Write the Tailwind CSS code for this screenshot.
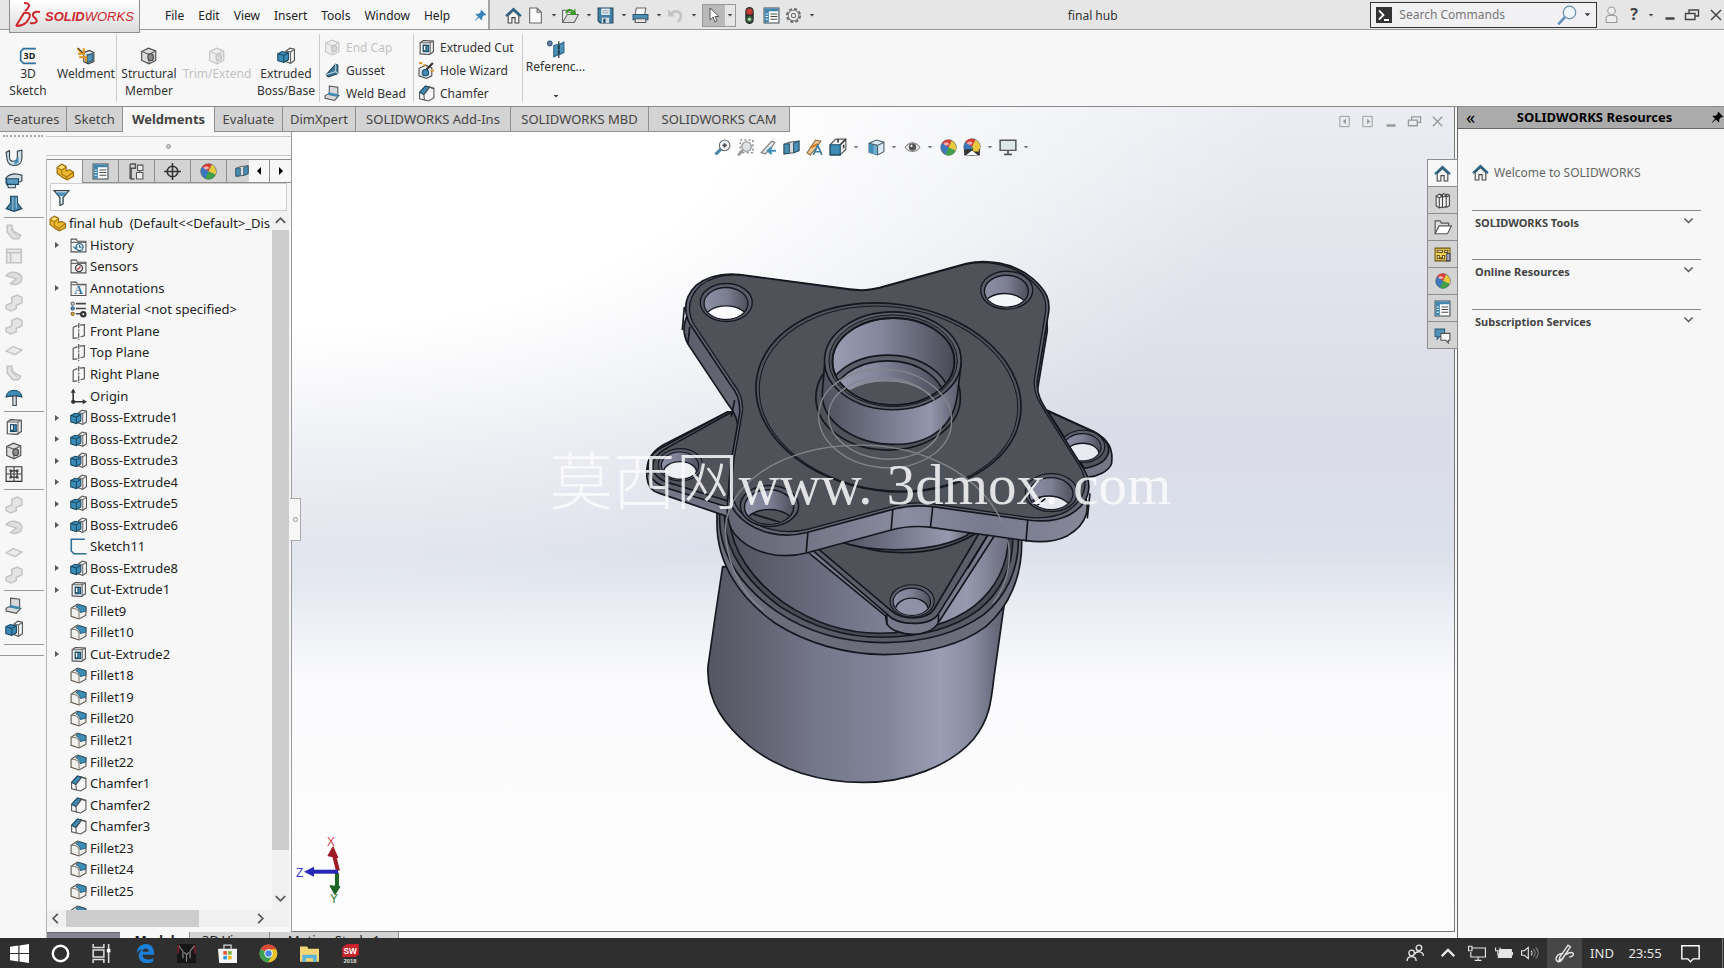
<!DOCTYPE html>
<html lang="en">
<head>
  <meta charset="UTF-8">
  <meta name="viewport" content="width=device-width, initial-scale=1.0">
  <title>final hub - SOLIDWORKS</title>
  <script src="https://cdn.jsdelivr.net/npm/@tailwindcss/browser@4"></script>
</head>
<body class="h-screen flex flex-col overflow-hidden bg-[#f7f7f7] font-['Noto_Sans','Open_Sans',sans-serif] text-[13px] leading-[17px] text-[#333]">

  <!-- Icon set -->
  <svg class="hidden">
    <symbol id="home" viewBox="0 0 16 16"><path d="M3 8v7h3.500v-5h3v5H13V8L8 3.500z" fill="#f4f4f4" stroke="#444"/><path d="M1 8.500 8 2l7 6.500" fill="none" stroke="#2c6486" stroke-width="2.200"/></symbol>
    <symbol id="doc" viewBox="0 0 16 16"><path d="M2.500 1h7l4 4v10h-11zM9.500 1v4h4" fill="#fbfbfb" stroke="#666"/></symbol>
    <symbol id="open" viewBox="0 0 16 16"><path d="M.5 14V3h5l1 2h6v2" fill="#eee" stroke="#666"/><path d="M.5 14.500 5 7h10.500l-4 7.500z" fill="#ddd" stroke="#666"/><path d="M4 6c1-4 4-4 6-2" fill="none" stroke="#3a9a22" stroke-width="2"/><path d="M12.500 1.500v6h-6z" fill="#3a9a22"/></symbol>
    <symbol id="save" viewBox="0 0 16 16"><path d="M1 1h14v14H3l-2-2z" fill="#3f7fa3" stroke="#25485e"/><path d="M4 1.500h8v6H4z" fill="#e9eef2"/><path d="M5 3.500h6M5 5.500h6" stroke="#9ab"/><path d="M4.500 10h7v5h-7z" fill="#cfd8de"/><path d="M6 11h2v4H6z" fill="#25485e"/></symbol>
    <symbol id="print" viewBox="0 0 16 16"><path d="M4 1h9l-1 6H3z" fill="#f5f5f5" stroke="#666"/><path d="M1 7h14v5H1z" fill="#4a8fb5" stroke="#2c5a74"/><path d="M3 11h10v3.500H3z" fill="#e5e5e5" stroke="#555"/></symbol>
    <symbol id="undo" viewBox="0 0 16 16"><path d="M3 7c4-5 11-3 10 3-.4 2-1.500 3-3 4" fill="none" stroke="#c4c4c4" stroke-width="2.500"/><path d="M1 2v7h7z" fill="#c4c4c4"/></symbol>
    <symbol id="cursor" viewBox="0 0 16 16"><path d="M4 1v12l3-3 2 5 2-1-2-4.500h4z" fill="#fff" stroke="#555"/></symbol>
    <symbol id="traffic" viewBox="0 0 16 16"><rect x="4" y="0" width="8" height="16" rx="4" fill="#2d2d2d"/><circle cx="8" cy="4.300" r="3" fill="#c33b35"/><circle cx="8" cy="11.500" r="3" fill="#35693a"/><circle cx="8" cy="11.500" r="1.500" fill="#b8dcb8"/></symbol>
    <symbol id="props" viewBox="0 0 16 16"><path d="M1 1h14v14H1z" fill="#fff" stroke="#3d4a52"/><path d="M1.500 1.500h13v2.500h-13zM1.500 4h4v10.500h-4z" fill="#3f86ae"/><path d="M2.500 6.500h2M2.500 9h2M2.500 11.500h2" stroke="#fff"/><path d="M7 6.500h6.500M7 9h6.500M7 11.500h6.500" stroke="#4a4a4a"/></symbol>
    <symbol id="gear" viewBox="0 0 16 16"><circle cx="8" cy="8" r="6.300" fill="none" stroke="#666" stroke-width="1.600" stroke-dasharray="3 2"/><circle cx="8" cy="8" r="5" fill="#f0f0f0" stroke="#777"/><circle cx="8" cy="8" r="2" fill="none" stroke="#777"/></symbol>
    <symbol id="pin" viewBox="0 0 16 16"><path d="m9 1 6 6-1.500 1-1-.5-2.500 3 .3 2.500-1 .8L6 10.500 2 14l-1 .5.500-1L5 9.500 2 6.500l.8-1L5.500 6l3-2.500-.5-1z" fill="currentColor"/></symbol>
    <symbol id="sk3d" viewBox="0 0 16 16"><path d="M15 1.500H4L1.500 4v8L4 14.500h11" fill="none" stroke="#2d7098" stroke-width="1.500"/><text x="4" y="11" font-size="8" font-weight="bold" font-family="Noto Sans, sans-serif" fill="#222">3D</text></symbol>
    <symbol id="weld" viewBox="0 0 16 16"><path d="m6 5 5-2 4 2v8l-5 2-4-2z" fill="#e6e6e6" stroke="#444"/><path d="m9 7 5-1v6l-5 2z" fill="#4d95bd" stroke="#28546d"/><path d="M0 1l5 5M6 1v5H1M2 9h6v4" fill="none" stroke="#dd9a26" stroke-width="2"/><path d="m1 1 4 4" stroke="#333"/></symbol>
    <symbol id="cube" viewBox="0 0 16 16"><path d="m1.500 4 6-3 6.500 2.500v8.500l-6 3-6.500-3z" fill="#dcdcdc" stroke="#4a4a4a"/><path d="m1.500 4 6.500 2.500L14 3.500M8 6.500V15" fill="none" stroke="#666"/><ellipse cx="9.500" cy="9" rx="2.500" ry="3" fill="#8b8b8b" stroke="#444"/></symbol>
    <symbol id="boss" viewBox="0 0 16 16"><path d="M8 3.500 11.500 1 15.500 2v10L12 14.500 8 13z" fill="#f5f5f5" stroke="#555"/><path d="M12 4v10M8 3.500l4 1 3.500-2.500" fill="none" stroke="#666"/><path d="m.7 6 4-2 5.500 1.200v6L6 13.700.7 12z" fill="#3a8cb8" stroke="#1d4a63"/><path d="m.7 6 5.300 1.500 4-2.200M6 7.500v6" fill="none" stroke="#1d4a63"/></symbol>
    <symbol id="cut" viewBox="0 0 16 16"><path d="M2 3.500 5 1.500l9.500.5v10L11 14.500 2 14z" fill="#eef0f2" stroke="#4a4a4a"/><path d="M2 3.500h9.500V14M11.500 3.500l3-1.500" fill="none" stroke="#666"/><path d="M5 6h5v6H5z" fill="#3f8db7" stroke="#1d4a63"/><path d="M5 6h2.500v5H5z" fill="#fff" stroke="#1d4a63"/></symbol>
    <symbol id="hole" viewBox="0 0 16 16"><path d="m1 6 6-3 6 2.500V13l-5 2.500L1 13z" fill="#e6ebee" stroke="#4a4a4a"/><circle cx="7" cy="10" r="3" fill="#3f8db7" stroke="#1d4a63"/><path d="m8 7 6-6" stroke="#333" stroke-width="2"/><path d="M1 1h3M5 3h2M12 8h3" stroke="#dd9a26" stroke-width="2"/></symbol>
    <symbol id="fillet" viewBox="0 0 16 16"><path d="M1 5 7 1l8 2.500v8L8.500 15 1 12.500z" fill="#f1f1ee" stroke="#5b5148"/><path d="M5.500 3.500C7 2 8 1.500 9 1.700l6 2v4L9.500 9c0-3-2-4.500-4-5.500z" fill="#3f8db7" stroke="#1f536f" stroke-width=".8"/><path d="M1 5c5 0 7.500 2 7.500 4.500V15" fill="none" stroke="#8a8178"/></symbol>
    <symbol id="chamfer" viewBox="0 0 16 16"><path d="M1.500 7 7 1l8 2v9l-5 3-8.500-2z" fill="#f6f6f6" stroke="#555"/><path d="M1.500 7 7 1l4 1-5.500 7z" fill="#3f8db7" stroke="#1c4b64"/><path d="M5.500 9 6 14.500M5.500 9l5-7 4.500 1.500" fill="none" stroke="#555"/></symbol>
    <symbol id="gusset" viewBox="0 0 16 16"><path d="M2 12 11 2l2 1v8L4 14z" fill="#3b7797" stroke="#1f3f50"/><path d="M2 12l9-3V2M11 9l2 2" fill="none" stroke="#b8d4e2"/></symbol>
    <symbol id="bead" viewBox="0 0 16 16"><path d="m5 1 8 1v8l-8-1zM1 10l4-2 9 2-4 4.500-9-2z" fill="#d9d9d9" stroke="#555"/><path d="m4 8 9 2" stroke="#3f8db7" stroke-width="2.500"/></symbol>
    <symbol id="refgeo" viewBox="0 0 16 16"><path d="m6 5 4-1v9l-4 2zM11 4l4-2v9l-4 2z" fill="#4b93b8" stroke="#2c6486"/><path d="M10.500 1v15" stroke="#222" stroke-dasharray="3 1"/><circle cx="2.500" cy="3" r="2" fill="#77a" stroke="#2c6486"/></symbol>
    <symbol id="part" viewBox="0 0 16 16"><path d="M1 4 5 1l4 2v4l3-1 3.500 2v4L10 15l-4-2-5-4z" fill="#edb92e" stroke="#91640b"/><path d="m1 4 4 2.500V10l4.500 2.500 5.500-4M5 6.500 9 3.500M9.500 12v3" fill="none" stroke="#a8770f"/><path d="m2 4 3-2 3 1.300L5 5.500z" fill="#ffe07a"/></symbol>
    <symbol id="config" viewBox="0 0 16 16"><path d="M2 1h5v4H3v10h3M2 1v14" fill="none" stroke="#555" stroke-width="1.300"/><path d="M9 2h5v5H9zM8 9h6v6H8z" fill="#eee" stroke="#555"/><path d="M11 7v2" stroke="#555"/></symbol>
    <symbol id="target" viewBox="0 0 16 16"><circle cx="8" cy="8" r="5" fill="none" stroke="#333" stroke-width="1.500"/><path d="M8 0v16M0 8h16" stroke="#333" stroke-width="1.500"/></symbol>
    <symbol id="ball" viewBox="0 0 16 16"><circle cx="8" cy="8" r="7.300" fill="#3b78c0" stroke="#555" stroke-width=".6"/><path d="M8 8 2 3.500A7.300 7.300 0 0 1 11 1.500z" fill="#d63b32"/><path d="M8 8 11 1.500A7.300 7.300 0 0 1 14.500 11z" fill="#e9c83b"/><path d="M8 8 14.500 11A7.300 7.300 0 0 1 5 14.800z" fill="#3fa045"/><ellipse cx="6" cy="4.500" rx="2.500" ry="1.500" fill="#fff" opacity=".6"/></symbol>
    <symbol id="funnel" viewBox="0 0 16 16"><path d="M1 1.500h14L9.500 8v6L6.500 15.500V8z" fill="#e8f1f6" stroke="#33444e" stroke-width="1.200"/><path d="M2.500 3h11L10 6.500H6z" fill="#4c93b8"/></symbol>
    <symbol id="history" viewBox="0 0 16 16"><path d="M1 14V2h5l1 2h8v10z" fill="#f6f6f6" stroke="#555"/><path d="M1 5h14" stroke="#555"/><circle cx="9" cy="9.500" r="3.300" fill="none" stroke="#2d7098" stroke-width="1.300"/><path d="M9 7.500v2h2M3 9l2 2 2-2" fill="none" stroke="#2d7098"/></symbol>
    <symbol id="sensors" viewBox="0 0 16 16"><path d="M1 14V2h5l1 2h8v10z" fill="#f6f6f6" stroke="#555"/><path d="M1 5h14" stroke="#555"/><circle cx="8.500" cy="9.500" r="3.300" fill="#fff" stroke="#444" stroke-width="1.300"/><path d="m7 11 3-3" stroke="#c33" stroke-width="1.300"/></symbol>
    <symbol id="annot" viewBox="0 0 16 16"><path d="M1 14.500V2h5l1 2h8v10.500z" fill="#f6f6f6" stroke="#555"/><path d="M1 4.500h14" stroke="#555"/><text x="4" y="13.500" font-size="11" font-weight="bold" font-family="Liberation Serif, serif" fill="#2d7098">A</text></symbol>
    <symbol id="material" viewBox="0 0 16 16"><path d="M5.500 2.500H15M5.500 7H15M5.500 12H11" stroke="#444" stroke-width="1.500"/><circle cx="2.500" cy="2.500" r="1.500" fill="#ddd" stroke="#666"/><circle cx="2.500" cy="7" r="1.500" fill="#6ab" stroke="#358"/><circle cx="2.500" cy="12" r="1.500" fill="#eb3" stroke="#863"/><circle cx="12.500" cy="12.500" r="3" fill="#333"/><circle cx="12.500" cy="12.500" r="1" fill="#fff"/></symbol>
    <symbol id="plane" viewBox="0 0 16 16"><path d="m3 4 4-1.500M9 2l4.500-.5v10.500L10 13M7 14l-4 .5V4" fill="none" stroke="#555" stroke-width="1.100"/><path d="M8.200 0v16" stroke="#555" stroke-width="1.100" stroke-dasharray="5 1 2 1"/></symbol>
    <symbol id="origin" viewBox="0 0 16 16"><path d="M3 2v11h11" fill="none" stroke="#333" stroke-width="1.500"/><path d="M.7 4.500 3 .5l2.300 4zM12 10.700l4 2.300-4 2.300z" fill="#333"/><circle cx="3" cy="13" r="2" fill="#333"/></symbol>
    <symbol id="sketch" viewBox="0 0 16 16"><path d="M14 1.200H1.200v11l2.500 2.600H15.500" fill="none" stroke="#2d7098" stroke-width="1.500"/></symbol>
    <symbol id="search" viewBox="0 0 16 16"><circle cx="10" cy="6" r="5" fill="#f0f7fb" stroke="#6a8fb0"/><path d="m6.500 9.500-5.500 6" stroke="#5f8fb8" stroke-width="2"/></symbol>
    <symbol id="term" viewBox="0 0 16 16"><path d="M0 0h16v16H0z" fill="#333"/><path d="M3 3.500 7.500 8 3 12.500M8 13h5" fill="none" stroke="#fff" stroke-width="1.800"/></symbol>
    <symbol id="user" viewBox="0 0 16 16"><circle cx="8" cy="4.500" r="3.500" fill="#eee" stroke="#999"/><path d="M3 15.500V11c0-3 10-3 10 0v4.500z" fill="#eee" stroke="#999"/></symbol>
    <symbol id="restore" viewBox="0 0 16 16"><path d="M5 6V3h9.500v6H11M1.500 6.500H11v6H1.500z" fill="none" stroke="currentColor" stroke-width="1.400"/></symbol>
    <symbol id="close" viewBox="0 0 16 16"><path d="m3 3 10 10M13 3 3 13" stroke="currentColor" stroke-width="1.500"/></symbol>
    <symbol id="minus" viewBox="0 0 16 16"><path d="M3.500 11.500h9" stroke="currentColor" stroke-width="2.500"/></symbol>
    <symbol id="dockl" viewBox="0 0 16 16"><path d="M3 2.500h10v11H3z" fill="none" stroke="currentColor"/><path d="M9.500 5v6L6 8z" fill="currentColor"/></symbol>
    <symbol id="dockr" viewBox="0 0 16 16"><path d="M3 2.500h10v11H3z" fill="none" stroke="currentColor"/><path d="M7.500 5v6L11 8z" fill="currentColor"/></symbol>
    <symbol id="chev" viewBox="0 0 16 16"><path d="m3 5.500 5 5 5-5" fill="none" stroke="currentColor" stroke-width="1.800"/></symbol>
    <symbol id="caret" viewBox="0 0 8 8"><path d="M1 2.500h6L4 6z" fill="currentColor"/></symbol>
    <symbol id="zoomfit" viewBox="0 0 16 16"><circle cx="10" cy="6" r="5" fill="#eef4f7" stroke="#666"/><path d="M8 6h4M10 4v4" stroke="#444" stroke-width="1.500"/><path d="m6.500 9.500-5 5" stroke="#4a87aa" stroke-width="3"/></symbol>
    <symbol id="zoomarea" viewBox="0 0 16 16"><path d="M3 1h12v12H3z" fill="none" stroke="#666" stroke-dasharray="2 2"/><circle cx="9" cy="7" r="4.500" fill="#dde3e7" stroke="#888"/><path d="m5.500 10.500-4.500 5" stroke="#999" stroke-width="2.500"/></symbol>
    <symbol id="prev" viewBox="0 0 16 16"><path d="m1 13 10-11 3 1-3 5-6 6z" fill="#dde3e7" stroke="#777"/><path d="M8 11h7M11 8l-3.500 3 3.500 3" fill="none" stroke="#3f8db7" stroke-width="2"/></symbol>
    <symbol id="section" viewBox="0 0 16 16"><path d="m1 5 5-2 9-1v9l-5 2-9 1z" fill="#dcdcdc" stroke="#555"/><path d="m1 5 5-.5V13.500L1 14zM10 4l5-2v9l-5 2z" fill="#4a90b5" stroke="#28546d"/></symbol>
    <symbol id="dynannot" viewBox="0 0 16 16"><path d="m1 13 8-12 5 1-4 6-6 7z" fill="#e8c698" stroke="#8c6a3a"/><path d="M4 8l7-3" stroke="#d67a22" stroke-width="2"/><path d="m7 15 4-9 4 9M8.500 12h5" fill="none" stroke="#3f7fa3" stroke-width="1.600"/></symbol>
    <symbol id="viewor" viewBox="0 0 16 16"><path d="m1 6 5-5h9v9l-5 5H1z" fill="#f2f2f2" stroke="#555"/><path d="M1 6h9v9H1z" fill="#3f8db7" stroke="#1d4a63"/><path d="m10 6 5-5M8 1v3M13 6v3" stroke="#333" stroke-width="1.400"/></symbol>
    <symbol id="shaded" viewBox="0 0 16 16"><path d="m1 4 7-3 7 2v9l-6 3-8-2.500z" fill="#d9ecf5" stroke="#4f5d66"/><path d="m1 4 8 2v9l-8-2.500z" fill="#6fb0d0"/><path d="m1 4 4 1v8.500l-4-1z" fill="#3f8db7"/><path d="m1 4 8 2 6-3M9 6v9" fill="none" stroke="#4f5d66"/></symbol>
    <symbol id="eye" viewBox="0 0 16 16"><path d="M1 8c4-6 10-6 14 0-4 5-10 5-14 0z" fill="#eee" stroke="#888"/><circle cx="8" cy="7.500" r="3.500" fill="#555"/><circle cx="7" cy="6.500" r="1" fill="#fff"/></symbol>
    <symbol id="monitor" viewBox="0 0 16 16"><path d="M1 2h14v9H1z" fill="#dfe6ea" stroke="#555" stroke-width="1.300"/><path d="M8 11v3M4.500 14.500h7" stroke="#555" stroke-width="1.600"/></symbol>
    <symbol id="scene" viewBox="0 0 16 16"><use href="#ball" width="16" height="16"/><path d="M1 10h14v5.500H1z" fill="#333"/><path d="m3 15 5-4 5 4z" fill="#fff"/><path d="M9 8h5v4H9z" fill="#e9c83b"/></symbol>
    <symbol id="books" viewBox="0 0 16 16"><path d="m2 4 3-2 3 1v11l-3 1-3-2zM6 4l3-2.500 2.500 1v11L8 15M10 4l3-2 1.500 1v10L11 14.500" fill="#eee" stroke="#444"/><path d="M2 4l3 1.500V15M5 5.500 8 4M8 5l3-1.500M11 5l3-1.500" fill="none" stroke="#444"/></symbol>
    <symbol id="folder" viewBox="0 0 16 16"><path d="M1 14V2.500h4.500l1 2H13V7" fill="#ddd" stroke="#555"/><path d="M1 14 4.500 7h11L12 14z" fill="#fff" stroke="#555"/></symbol>
    <symbol id="palette" viewBox="0 0 16 16"><path d="M1 2h14v12H1z" fill="#f2cf5a" stroke="#6b5310"/><path d="M3 4h5v2H3zM10 4h3v2h-3z" fill="#fff" stroke="#6b5310"/><path d="M3 12V9h2v2h3V9h2v3z" fill="#fff" stroke="#6b5310"/><path d="M12 7h3v7h-3z" fill="#aab" stroke="#446"/></symbol>
    <symbol id="forum" viewBox="0 0 16 16"><path d="M1 2h9v7H5l-2 2.500V9H1z" fill="#4f93b9" stroke="#2f617e"/><path d="M6.500 6H15v6.500h-1.500V15L11 12.500H6.500z" fill="#f4f4f4" stroke="#555"/></symbol>
    <!-- side toolbar -->
    <symbol id="u-shape" viewBox="0 0 16 16"><path d="M1 3 4 1.500V8c0 4 7 4 7-1V2l4-1v7c0 9-12 8-13 2z" fill="#d2e2eb" stroke="#33424b"/><path d="m9 10 3-3v5l-4 2z" fill="#3f8db7"/></symbol>
    <symbol id="sweep" viewBox="0 0 16 16"><path d="M1 5c4-4 9-4 14-2v5c-4 1-6 3-6 6H3c0-2-2-3-2-4z" fill="#cfdbe2" stroke="#33424b"/><path d="M1 6h11v5H2z" fill="#5a9cc0" stroke="#1d4a63"/></symbol>
    <symbol id="loft" viewBox="0 0 16 16"><path d="M5 2h6v6l4 5-7 2.500L1 13l4-5z" fill="#3f7fa3" stroke="#1d4a63"/><path d="M7 3v11M10 3v10" stroke="#9cc4d8"/></symbol>
    <symbol id="umbrella" viewBox="0 0 16 16"><path d="M1 8C2 0 14 0 15 8l-4-1-3 1-3-1z" fill="#3f8db7" stroke="#1d4a63"/><path d="M7 7h3v8.500H7z" fill="#dce4e9" stroke="#445"/></symbol>
    <symbol id="grid" viewBox="0 0 16 16"><path d="M1 1.500h14v13H1z" fill="#eee" stroke="#333"/><path d="M1 8h14M8 1.500v13" stroke="#444"/><path d="M4 4h2v2H4zM10 4h2v2h-2zM4 10h2v2H4zM10 10h2v2h-2z" fill="#333"/><circle cx="8" cy="8" r="3" fill="none" stroke="#333"/></symbol>
    <symbol id="g1" viewBox="0 0 16 16"><path d="M2 2h4l1 5 7 4-2 3H7L2 8z" fill="#e4e4e4" stroke="#c4c4c4" stroke-width="1.400"/><path d="M5 5l6 7" stroke="#c4c4c4"/></symbol>
    <symbol id="g2" viewBox="0 0 16 16"><path d="M1.500 2h13v12h-13zM1.500 5h13M5 5v9" fill="#ececec" stroke="#c4c4c4" stroke-width="1.400"/></symbol>
    <symbol id="g3" viewBox="0 0 16 16"><path d="M1 5c4-5 13-3 14 2 0 5-6 7-10 5l5-4z" fill="#dedede" stroke="#c4c4c4" stroke-width="1.400"/></symbol>
    <symbol id="g4" viewBox="0 0 16 16"><path d="m6 3 5-2 4 2v5l-5 2v3l-5 2-4-2v-3l5-2z" fill="#e4e4e4" stroke="#c4c4c4" stroke-width="1.400"/></symbol>
    <symbol id="g5" viewBox="0 0 16 16"><path d="m1 9 6-4 8 3-6 4z" fill="#ececec" stroke="#c8c8c8" stroke-width="1.400"/></symbol>
    <!-- model pieces -->
    <symbol id="bore" viewBox="0 0 160 120" overflow="visible">
      <ellipse cx="80" cy="60" rx="78" ry="57" fill="#5a5c69" stroke="#15171f" stroke-width="4"/>
      <ellipse cx="79" cy="63" rx="66" ry="48" fill="url(#boreg)" stroke="#15171f" stroke-width="4"/>
    </symbol>
  </svg>

  <!-- Title bar -->
  <header class="h-[30px] shrink-0 flex items-center bg-[#e6e6e6] border-b border-[#9a9a9a]">
    <div class="relative z-20 self-start ml-[9px] w-[131px] h-[33px] shrink-0 bg-linear-to-b from-white to-[#dcdcdc] border border-t-0 border-[#8e8e8e] flex items-center pl-1 text-[#d0262d]">
      <svg class="w-[28px] h-[28px]" viewBox="0 0 28 28" fill="none" stroke="currentColor" stroke-width="2">
        <path d="M10 1c6 0 7 3 1 8M2 24l8-13c7-1 7 3 4 7-2 4-6 6-12 6M26 10c-6-1-9 2-6 5l2 2c2 3-1 5-6 4"/>
      </svg>
      <span class="ml-[3px] font-['Liberation_Sans',sans-serif] text-[13px] italic"><b>SOLID</b>WORKS</span>
    </div>
    <nav class="h-full w-[350px] shrink-0 flex items-center gap-[14px] pt-[2px] pl-[25px] bg-[#f7f7f7] border-r-2 border-[#a5a5a5] text-[12px] text-[#222]">
      <button>File</button><button>Edit</button><button>View</button><button>Insert</button><button>Tools</button><button>Window</button><button>Help</button>
      <svg class="size-[13px] ml-[10px] text-[#3584ba]"><use href="#pin"/></svg>
    </nav>
    <div class="flex items-center pl-[15px] pt-px gap-[5px] shrink-0 text-[#444]">
      <button aria-label="Home"><svg class="size-[17px]"><use href="#home"/></svg></button>
      <button aria-label="New" class="flex items-center gap-[7px]"><svg class="size-[17px]"><use href="#doc"/></svg><svg class="size-[6px]"><use href="#caret"/></svg></button>
      <button aria-label="Open" class="flex items-center gap-[7px]"><svg class="size-[17px]"><use href="#open"/></svg><svg class="size-[6px]"><use href="#caret"/></svg></button>
      <button aria-label="Save" class="flex items-center gap-[7px]"><svg class="size-[17px]"><use href="#save"/></svg><svg class="size-[6px]"><use href="#caret"/></svg></button>
      <button aria-label="Print" class="flex items-center gap-[7px]"><svg class="size-[17px]"><use href="#print"/></svg><svg class="size-[6px]"><use href="#caret"/></svg></button>
      <button aria-label="Undo" class="flex items-center gap-[7px]"><svg class="size-[17px]"><use href="#undo"/></svg><svg class="size-[6px]"><use href="#caret"/></svg></button>
      <button aria-label="Select" class="flex items-center h-[23px] border border-[#999]"><span class="h-full w-[22px] bg-[#b9b9b9] flex items-center justify-center"><svg class="size-[16px]"><use href="#cursor"/></svg></span><svg class="size-[6px] mx-[2px]"><use href="#caret"/></svg></button>
      <button aria-label="Rebuild"><svg class="size-[17px]"><use href="#traffic"/></svg></button>
      <button aria-label="File properties"><svg class="size-[17px]"><use href="#props"/></svg></button>
      <button aria-label="Options" class="flex items-center gap-[7px]"><svg class="size-[17px]"><use href="#gear"/></svg><svg class="size-[6px]"><use href="#caret"/></svg></button>
    </div>
    <div class="flex-1 text-center pt-[2px] text-[12px] text-[#333]">final hub</div>
    <div class="flex items-center shrink-0 w-[227px] h-[26px] border border-[#333] bg-[#f1f1f4] px-[5px]">
      <svg class="size-[16px]"><use href="#term"/></svg>
      <input type="text" aria-label="Search Commands" placeholder="Search Commands" class="flex-1 min-w-0 pl-[7px] bg-transparent outline-none text-[12px] placeholder:text-[#777]">
      <button aria-label="Search" class="flex items-center gap-[7px]"><svg class="size-[20px]"><use href="#search"/></svg><svg class="size-[7px]"><use href="#caret"/></svg></button>
    </div>
    <div class="flex items-center shrink-0 pl-[6px] text-[#444]">
      <svg class="size-[17px]"><use href="#user"/></svg>
      <button class="ml-[10px] font-bold text-[16px]">?</button>
      <svg class="size-[6px] ml-[10px]"><use href="#caret"/></svg>
      <button aria-label="Minimize" class="ml-[8px]"><svg class="size-[16px]"><use href="#minus"/></svg></button>
      <button aria-label="Restore" class="ml-[6px]"><svg class="size-[16px]"><use href="#restore"/></svg></button>
      <button aria-label="Close" class="ml-[8px]"><svg class="size-[16px]"><use href="#close"/></svg></button>
    </div>
  </header>

  <!-- Ribbon -->
  <section class="h-[77px] shrink-0 flex py-1 border-b border-[#8a8a8a] text-center text-[12px] text-[#333]">
    <button class="w-[56px] flex flex-col items-center pt-[13px]"><svg class="size-[18px]"><use href="#sk3d"/></svg><span>3D<br>Sketch</span></button>
    <button class="w-[60px] flex flex-col items-center pt-[13px]"><svg class="size-[18px]"><use href="#weld"/></svg><span>Weldment</span></button>
    <button class="w-[65px] border-l border-[#ccc] flex flex-col items-center pt-[13px]"><svg class="size-[18px]"><use href="#cube"/></svg><span>Structural<br>Member</span></button>
    <button class="w-[72px] flex flex-col items-center pt-[13px] text-[#c2c2c2]" disabled><svg class="size-[18px] opacity-30"><use href="#cube"/></svg><span>Trim/Extend</span></button>
    <button class="w-[66px] flex flex-col items-center pt-[13px]"><svg class="size-[18px]"><use href="#boss"/></svg><span>Extruded<br>Boss/Base</span></button>
    <div class="w-[94px] border-l border-[#ccc] flex flex-col gap-[6px] pl-[4px] pt-[5px] whitespace-nowrap">
      <button class="flex items-center gap-[5px] text-[#c2c2c2]" disabled><svg class="size-[17px] opacity-30"><use href="#cube"/></svg>End Cap</button>
      <button class="flex items-center gap-[5px]"><svg class="size-[17px]"><use href="#gusset"/></svg>Gusset</button>
      <button class="flex items-center gap-[5px]"><svg class="size-[17px]"><use href="#bead"/></svg>Weld Bead</button>
    </div>
    <div class="w-[109px] border-l border-[#ccc] flex flex-col gap-[6px] pl-[4px] pt-[5px] whitespace-nowrap">
      <button class="flex items-center gap-[5px]"><svg class="size-[17px]"><use href="#cut"/></svg>Extruded Cut</button>
      <button class="flex items-center gap-[5px]"><svg class="size-[17px]"><use href="#hole"/></svg>Hole Wizard</button>
      <button class="flex items-center gap-[5px]"><svg class="size-[17px]"><use href="#chamfer"/></svg>Chamfer</button>
    </div>
    <button class="w-[66px] border-l border-[#ccc] flex flex-col items-center pt-[6px]"><svg class="size-[18px]"><use href="#refgeo"/></svg><span>Referenc...</span><svg class="size-[6px] mt-[18px]"><use href="#caret"/></svg></button>
  </section>

  <main class="relative flex-1 min-h-0 flex">
    <!-- Command tabs -->
    <nav class="absolute z-10 left-0 top-0 h-[25px] flex text-[13px] text-[#444]">
      <button class="w-[67px] bg-[#d3d3d3] border-r border-b border-[#8e8e8e]">Features</button>
      <button class="w-[56px] bg-[#d3d3d3] border-r border-b border-[#8e8e8e]">Sketch</button>
      <button class="w-[92px] bg-[#f7f7f7] border-r border-[#8e8e8e] font-bold">Weldments</button>
      <button class="w-[68px] bg-[#d3d3d3] border-r border-b border-[#8e8e8e]">Evaluate</button>
      <button class="w-[73px] bg-[#d3d3d3] border-r border-b border-[#8e8e8e]">DimXpert</button>
      <button class="w-[155px] bg-[#d3d3d3] border-r border-b border-[#8e8e8e]">SOLIDWORKS Add-Ins</button>
      <button class="w-[138px] bg-[#d3d3d3] border-r border-b border-[#8e8e8e]">SOLIDWORKS MBD</button>
      <button class="w-[141px] bg-[#d3d3d3] border-r border-b border-[#8e8e8e]">SOLIDWORKS CAM</button>
    </nav>

    <!-- Side toolbar -->
    <aside class="w-[46px] shrink-0 pt-[28px]">
      <div class="mx-[3px] border-t-2 border-dotted border-[#aaa]"></div>
      <div id="tools" class="flex flex-col pt-[7px]"></div>
      <div class="mt-[10px] mr-[2px] border-t border-[#999]"></div>
    </aside>

    <!-- Feature tree -->
    <section class="w-[246px] shrink-0 flex flex-col border-r border-[#9a9a9a]">
      <div class="h-[52px] pt-[29px]">
        <div class="h-[20px] border-y border-[#c8c8c8] flex items-center justify-center"><span class="size-[5px] rounded-full border border-[#999] bg-[#ccc]"></span></div>
      </div>
      <div class="flex-1 min-h-0 flex flex-col border-l border-[#b5b5b5]">
        <div class="h-[24px] shrink-0 flex border-t border-[#8e8e8e]">
          <button aria-label="Feature tree" class="w-[36px] flex items-center justify-center border-r border-[#8e8e8e]"><svg class="size-[18px]"><use href="#part"/></svg></button>
          <button aria-label="Properties" class="w-[36px] flex items-center justify-center bg-[#d3d3d3] border-r border-b border-[#8e8e8e]"><svg class="size-[17px]"><use href="#props"/></svg></button>
          <button aria-label="Configurations" class="w-[36px] flex items-center justify-center bg-[#d3d3d3] border-r border-b border-[#8e8e8e]"><svg class="size-[17px]"><use href="#config"/></svg></button>
          <button aria-label="DimXpert" class="w-[36px] flex items-center justify-center bg-[#d3d3d3] border-r border-b border-[#8e8e8e]"><svg class="size-[17px]"><use href="#target"/></svg></button>
          <button aria-label="Appearances" class="w-[36px] flex items-center justify-center bg-[#d3d3d3] border-r border-b border-[#8e8e8e]"><svg class="size-[17px]"><use href="#ball"/></svg></button>
          <button aria-label="CAM" class="w-[22px] flex items-center justify-end overflow-hidden bg-[#d3d3d3] border-b border-[#8e8e8e]"><svg class="size-[14px]"><use href="#section"/></svg></button>
          <button aria-label="Previous tabs" class="w-[21px] flex items-center justify-center border-r border-b border-[#8e8e8e]"><span class="border-y-4 border-y-transparent border-r-4 border-r-black"></span></button>
          <button aria-label="Next tabs" class="flex-1 flex items-center justify-center border-b border-[#8e8e8e]"><span class="border-y-4 border-y-transparent border-l-4 border-l-black"></span></button>
        </div>
        <div class="h-[28px] shrink-0 ml-[3px] mr-[4px] flex items-center pl-[2px] border border-[#ccc] bg-[#fafafa]">
          <svg class="size-[17px]"><use href="#funnel"/></svg>
          <input type="text" aria-label="Filter" class="flex-1 min-w-0 px-2 bg-transparent outline-none">
        </div>
        <div class="flex-1 min-h-0 flex">
          <div id="tree" class="w-[225px] pt-[2px] flex flex-col overflow-hidden text-[#222]"></div>
          <div class="w-[17px] flex flex-col bg-[#f0f0f0] text-[#555]">
            <svg class="size-[15px] my-[2px] mx-[1px] rotate-180"><use href="#chev"/></svg>
            <div class="flex-1 bg-[#cdcdcd]"></div>
            <div class="h-[60px] flex flex-col justify-end"><svg class="size-[15px] mb-[4px] mx-[1px]"><use href="#chev"/></svg></div>
          </div>
        </div>
        <div class="h-[17px] mr-[2px] shrink-0 flex items-center bg-[#f0f0f0] text-[#555]">
          <svg class="size-[15px] ml-px mr-[3px] rotate-90"><use href="#chev"/></svg>
          <div class="w-[133px] h-full bg-[#cdcdcd]"></div>
          <svg class="size-[15px] ml-[54px] -rotate-90"><use href="#chev"/></svg>
        </div>
        <div class="h-[11px] shrink-0"></div>
      </div>
    </section>

    <!-- Graphics area -->
    <section class="relative flex-1 min-w-0 mb-[6px] border-b border-r border-[#777] bg-[radial-gradient(ellipse_85%_60%_at_0%_0%,#ffffff_0%,#ffffff_45%,#ffffff00_100%),linear-gradient(to_bottom,#ebedf2_0%,#e0e3eb_22%,#dadde7_40%,#dce0ea_54%,#eceff5_62%,#fbfbfd_70%,#fdfdfe_100%)]">
      <svg class="absolute inset-0 w-full h-full" viewBox="292 107 1163 824">
        <defs>
          <linearGradient id="body"><stop offset="0" stop-color="#545662"/><stop offset=".12" stop-color="#5d5f6d"/><stop offset=".35" stop-color="#737588"/><stop offset=".6" stop-color="#83869b"/><stop offset=".78" stop-color="#9a9db4"/><stop offset=".88" stop-color="#8a8ca2"/><stop offset="1" stop-color="#5a5c6b"/></linearGradient>
          <linearGradient id="deck"><stop offset="0" stop-color="#50525e"/><stop offset=".45" stop-color="#74768a"/><stop offset=".85" stop-color="#9799ae"/><stop offset="1" stop-color="#6a6c7c"/></linearGradient>
          <linearGradient id="side"><stop offset="0" stop-color="#5c5e6b"/><stop offset=".2" stop-color="#6a6c7b"/><stop offset=".55" stop-color="#8a8c9f"/><stop offset=".75" stop-color="#777a8c"/><stop offset="1" stop-color="#868899"/></linearGradient>
          <linearGradient id="boreg"><stop offset="0" stop-color="#8d90a6"/><stop offset=".5" stop-color="#7d7f93"/><stop offset="1" stop-color="#4e505c"/></linearGradient>
          <linearGradient id="inner"><stop offset="0" stop-color="#9a9db2"/><stop offset=".4" stop-color="#84879b"/><stop offset="1" stop-color="#484a56"/></linearGradient>
          <linearGradient id="outer"><stop offset="0" stop-color="#4e505c"/><stop offset=".5" stop-color="#7b7e91"/><stop offset=".78" stop-color="#9496ac"/><stop offset="1" stop-color="#565867"/></linearGradient>
          <path id="star" d="M300 103 L630 147 C670 152 690 149 720 142 L980 70 C1040 57 1120 65 1180 115 C1225 155 1232 180 1228 215 L1194 420 C1190 460 1205 485 1232 527 L1335 690 C1362 740 1350 790 1290 825 C1250 845 1210 846 1165 840 L880 800 C840 795 800 797 760 808 L505 877 C430 897 340 880 290 820 C262 785 265 740 275 660 L300 520 C303 480 290 455 270 430 L150 250 C130 210 135 170 170 135 C205 108 250 98 300 103 Z"/>
          <clipPath id="borec"><ellipse cx="79" cy="63" rx="64" ry="46"/></clipPath>
          <clipPath id="topbore"><ellipse cx="762" cy="364" rx="181" ry="128"/></clipPath>
        </defs>
        <g transform="translate(640 240) scale(.33333)" stroke="#15171f" stroke-width="5" stroke-linejoin="round">
          <!-- drum -->
          <path d="M249 980 L228 1120 L205 1280 C200 1390 260 1460 331 1520 C420 1590 540 1628 672 1628 C800 1628 930 1580 1001 1500 C1050 1440 1055 1390 1064 1310 L1102 1040 Z" fill="url(#body)"/>
          <!-- flange -->
          <path d="M232 800 L232 850 C232 970 300 1075 407 1150 C500 1210 620 1244 735 1244 C860 1244 970 1212 1039 1160 C1110 1100 1147 1010 1147 910 L1147 880 Z" fill="#6b6d7b"/>
          <path d="M240 800 L240 840 C242 950 310 1045 412 1115 C505 1178 620 1208 735 1208 C860 1208 960 1175 1032 1125 C1100 1070 1137 990 1137 900 L1137 880 Z" fill="#595b67"/>
          <path d="M255 800 L255 840 C260 940 325 1030 422 1100 C515 1160 620 1192 725 1192 C850 1192 950 1160 1018 1110 C1085 1055 1120 980 1120 900 L1120 880 Z" fill="#474953"/>
          <path d="M270 800 L270 840 C277 930 335 1018 432 1088 C520 1148 620 1180 720 1180 C840 1180 940 1148 1005 1098 C1072 1045 1105 970 1108 890 L1108 880 Z" fill="url(#deck)"/>
          <!-- lower bracket -->
          <path d="M430 860 L515 945 L738 1128 L742 1152 C770 1192 870 1197 897 1148 L1070 880 Z" fill="#787a8b"/>
          <path d="M440 860 L535 945 L742 1122 C775 1160 870 1160 897 1122 L1055 870 Z" fill="#5b5d69"/>
          <path d="M455 860 L552 940 L755 1112 C790 1142 860 1142 884 1108 L1025 870 Z" fill="#50525a"/>
          <path d="M742 1122 V1152 M897 1122 V1148 M1045 885 L985 985" fill="none"/>
          <path d="M570 880 C690 955 880 960 1010 880 Z" fill="#50525a"/>
          <path d="M600 860 L600 905 C700 940 880 940 985 885 L985 820 Z" fill="url(#deck)"/>
          <path d="M265 515 L70 615 C30 640 18 665 22 715 C25 740 40 755 60 760 L300 842 L320 515 Z" fill="#747686"/>
          <path d="M265 515 L75 618 C30 640 18 670 28 700 C40 730 70 740 100 750 L300 812 L320 515 Z" fill="#5b5d69"/>
          <path d="M268 520 L85 622 C40 645 35 670 42 695 C55 720 80 728 110 735 L300 794 L320 520 Z" fill="#50525a"/>
          <path d="M1222 510 L1365 575 C1410 600 1422 630 1417 670 C1410 695 1370 710 1345 712 Z" fill="#747686"/>
          <path d="M1225 513 L1362 575 C1405 600 1415 620 1405 645 C1395 670 1365 680 1335 685 Z" fill="#50525a"/>
          <g transform="translate(54 623) scale(.85)"><use href="#bore" width="160" height="120"/><ellipse cx="79" cy="85" rx="58" ry="36" fill="#eff0f5" clip-path="url(#borec)"/></g>
          <g transform="translate(1262 568) scale(.85)"><use href="#bore" width="160" height="120"/><ellipse cx="79" cy="85" rx="58" ry="36" fill="#e8eaf1" clip-path="url(#borec)"/></g>
          <g transform="translate(750 1032) scale(.85)"><use href="#bore" width="160" height="120"/><ellipse cx="79" cy="92" rx="58" ry="42" fill="#8f91a6" clip-path="url(#borec)"/></g>
          <!-- top plate -->
          <use href="#star" x="-5" y="62" fill="url(#side)"/>
          <path d="M1352 760 L1344 835 M505 877 L500 938 M760 808 L755 870 M880 800 L873 862 M1165 840 L1160 905 M150 260 L145 310 M285 480 L275 530 M134 200 L128 270" fill="none"/>
          <use href="#star" fill="#636573"/>
          <use href="#star" fill="#50525a" stroke-width="4" transform="translate(14 4) scale(.981 .984)"/>
          <g fill="none"><ellipse cx="747" cy="472" rx="400" ry="281" transform="rotate(8 747 472)"/><ellipse cx="747" cy="475" rx="390" ry="275" transform="rotate(8 747 475)" stroke-width="3"/></g>
          <g transform="translate(180 127)"><use href="#bore" width="160" height="120"/><ellipse cx="79" cy="112" rx="66" ry="42" fill="#fbfbfd" stroke-width="4" clip-path="url(#borec)"/></g>
          <g transform="translate(1022 90)"><use href="#bore" width="160" height="120"/><ellipse cx="74" cy="112" rx="66" ry="42" fill="#f4f5f9" stroke-width="4" clip-path="url(#borec)"/></g>
          <g transform="translate(300 733) scale(1.12 1.08)"><use href="#bore" width="160" height="120"/><ellipse cx="79" cy="112" rx="66" ry="42" fill="#50525a" stroke-width="4" clip-path="url(#borec)"/><path d="M35 82 L110 106" clip-path="url(#borec)"/></g>
          <g transform="translate(1156 698)"><use href="#bore" width="160" height="120"/><ellipse cx="72" cy="112" rx="66" ry="42" fill="#e6e8ee" stroke-width="4" clip-path="url(#borec)"/><path d="M20 90 L48 74 M30 104 L62 78" clip-path="url(#borec)"/></g>
          <!-- central boss -->
          <ellipse cx="746" cy="472" rx="217" ry="158" fill="#50525a"/>
          <path d="M556 362 L548 462 C548 550 650 613 765 613 C870 613 940 560 953 470 L965 372 Z" fill="url(#outer)"/>
          <ellipse cx="760" cy="362" rx="205" ry="147" fill="#5b5d69"/>
          <ellipse cx="761" cy="362" rx="193" ry="138" fill="#50525a" stroke-width="3"/>
          <ellipse cx="762" cy="364" rx="183" ry="130" fill="url(#inner)"/>
          <g clip-path="url(#topbore)"><ellipse cx="745" cy="475" rx="185" ry="130" fill="#5b5d69"/><ellipse cx="745" cy="488" rx="172" ry="126" fill="url(#inner)"/><ellipse cx="740" cy="520" rx="160" ry="98" fill="#50525a" stroke="#888a90" stroke-width="4"/></g>
          <ellipse cx="762" cy="364" rx="183" ry="130" fill="none"/>
          <g fill="none" stroke="#85868c" stroke-width="4"><ellipse cx="737" cy="535" rx="200" ry="148" transform="rotate(5 737 535)"/><ellipse cx="737" cy="535" rx="170" ry="122" transform="rotate(5 737 535)"/><path d="M258 880 C250 740 420 615 660 615 C850 615 1020 700 1090 850 M1105 900 C1120 970 1100 1040 1060 1090 M258 880 C262 960 295 1050 370 1110"/></g>
        </g>
        <!-- triad -->
        <g stroke-width="4">
          <path d="M338 871 334 855" stroke="#9c1c22"/><path d="m333 847-5 9 10 2z" fill="#9c1c22" stroke="#9c1c22" stroke-width="1"/>
          <path d="M337 873v16" stroke="#1c6424"/><path d="m330 886 10 1-5 8z" fill="#1c6424" stroke="#1c6424" stroke-width="1"/>
          <path d="M338 872h-25" stroke="#2626b8"/><path d="m304 872 10-5v10z" fill="#2626b8"/>
        </g>
        <g font-family="Liberation Sans, sans-serif" font-size="12"><text x="327" y="846" fill="#d8404a">X</text><text x="296" y="877" fill="#3c3cc8">Z</text><text x="330" y="903" fill="#2a7a32">Y</text></g>
        <text x="550" y="504" font-family="Liberation Serif, serif" font-size="57" fill="#fbfbfd" fill-opacity=".85"><tspan font-family="Noto Sans CJK SC, sans-serif" font-size="63" font-weight="300">莫西网</tspan>www. 3dmox. com</text>
      </svg>

      <!-- view toolbar -->
      <div class="absolute top-[31px] left-0 right-0 flex items-center justify-center gap-[6px] pr-[3px] text-[#777]">
        <svg class="size-[17px]"><use href="#zoomfit"/></svg>
        <svg class="size-[17px]"><use href="#zoomarea"/></svg>
        <svg class="size-[17px]"><use href="#prev"/></svg>
        <svg class="size-[17px]"><use href="#section"/></svg>
        <svg class="size-[17px]"><use href="#dynannot"/></svg>
        <svg class="size-[18px]"><use href="#viewor"/></svg><svg class="size-[6px] mr-[3px]"><use href="#caret"/></svg>
        <svg class="size-[17px]"><use href="#shaded"/></svg><svg class="size-[6px] mr-[1px]"><use href="#caret"/></svg>
        <svg class="size-[17px]"><use href="#eye"/></svg><svg class="size-[6px] mr-[1px]"><use href="#caret"/></svg>
        <svg class="size-[17px]"><use href="#ball"/></svg>
        <svg class="size-[18px]"><use href="#scene"/></svg><svg class="size-[6px]"><use href="#caret"/></svg>
        <svg class="size-[18px]"><use href="#monitor"/></svg><svg class="size-[6px]"><use href="#caret"/></svg>
      </div>
      <div class="absolute top-[7px] right-[9px] flex gap-[8px] text-[#999]">
        <svg class="size-[15px]"><use href="#dockl"/></svg>
        <svg class="size-[15px]"><use href="#dockr"/></svg>
        <svg class="size-[16px]"><use href="#minus"/></svg>
        <svg class="size-[15px]"><use href="#restore"/></svg>
        <svg class="size-[15px]"><use href="#close"/></svg>
      </div>
      <button aria-label="Collapse panel" class="absolute left-[-2px] top-[391px] w-[11px] h-[43px] bg-[#f7f7f7] border border-l-0 border-[#aaa] flex items-center justify-center"><span class="size-[5px] rounded-full border border-[#999]"></span></button>
      <!-- task pane tabs -->
      <div class="absolute z-10 right-[-4px] top-[52px] w-[31px] flex flex-col border border-b-0 border-[#8e8e8e]">
        <button aria-label="Resources" class="h-[27px] flex items-center justify-center bg-[#f7f7f7] border-b border-[#8e8e8e]"><svg class="size-[17px]"><use href="#home"/></svg></button>
        <button aria-label="Design Library" class="h-[27px] flex items-center justify-center bg-[#d3d3d3] border-b border-[#8e8e8e]"><svg class="size-[17px]"><use href="#books"/></svg></button>
        <button aria-label="File Explorer" class="h-[27px] flex items-center justify-center bg-[#d3d3d3] border-b border-[#8e8e8e]"><svg class="size-[18px]"><use href="#folder"/></svg></button>
        <button aria-label="View Palette" class="h-[27px] flex items-center justify-center bg-[#d3d3d3] border-b border-[#8e8e8e]"><svg class="size-[17px]"><use href="#palette"/></svg></button>
        <button aria-label="Appearances" class="h-[27px] flex items-center justify-center bg-[#d3d3d3] border-b border-[#8e8e8e]"><svg class="size-[16px]"><use href="#ball"/></svg></button>
        <button aria-label="Custom Properties" class="h-[27px] flex items-center justify-center bg-[#d3d3d3] border-b border-[#8e8e8e]"><svg class="size-[17px]"><use href="#props"/></svg></button>
        <button aria-label="Forum" class="h-[27px] flex items-center justify-center bg-[#d3d3d3] border-b border-[#8e8e8e]"><svg class="size-[17px]"><use href="#forum"/></svg></button>
      </div>
    </section>

    <!-- Task pane -->
    <aside class="w-[269px] shrink-0 pl-[2px]">
      <div class="h-full border-l border-[#666]">
        <div class="h-[22px] flex items-center bg-[#ababab] border-b border-[#666] text-black">
          <button aria-label="Collapse" class="pl-[8px] text-[18px]">«</button>
          <h2 class="flex-1 text-center font-bold pl-[3px]">SOLIDWORKS Resources</h2>
          <svg class="size-[13px]"><use href="#pin"/></svg>
        </div>
        <div class="pl-[14px] pr-[23px] pt-[32px] text-[11px]">
          <a href="#" class="flex items-center gap-[5px] h-[22px] text-[12px] text-[#666]"><svg class="size-[17px]"><use href="#home"/></svg>Welcome to SOLIDWORKS</a>
          <div class="mt-[27px] h-[49px] pt-[3px] border-t border-[#888] flex justify-between"><h3 class="pl-[3px] font-bold text-[#444]">SOLIDWORKS Tools</h3><svg class="size-[13px] mr-[6px] text-[#555]"><use href="#chev"/></svg></div>
          <div class="h-[50px] pt-[3px] border-t border-[#888] flex justify-between"><h3 class="pl-[3px] font-bold text-[#444]">Online Resources</h3><svg class="size-[13px] mr-[6px] text-[#555]"><use href="#chev"/></svg></div>
          <div class="h-[50px] pt-[3px] border-t border-[#888] flex justify-between"><h3 class="pl-[3px] font-bold text-[#444]">Subscription Services</h3><svg class="size-[13px] mr-[6px] text-[#555]"><use href="#chev"/></svg></div>
        </div>
      </div>
    </aside>

    <!-- Model tabs, cut off by the taskbar -->
    <div class="absolute left-[47px] bottom-0 h-[6px] flex items-start overflow-hidden leading-[16px] text-center text-[#222]">
      <div class="w-[73px] h-full bg-[#868795] border-t border-[#666]"></div>
      <button class="w-[69px] h-[16px] bg-[#f7f7f7] font-bold">Model</button>
      <button class="w-[80px] h-[16px] bg-[#d3d3d3] border-l border-[#8e8e8e]">3D Views</button>
      <button class="w-[130px] h-[16px] bg-[#d3d3d3] border-x border-[#8e8e8e]">Motion Study 1</button>
    </div>
  </main>

  <!-- Taskbar -->
  <footer class="h-[30px] shrink-0 flex items-center justify-between bg-[#2f2f2f] text-[#e6e6e6] pl-[10px]">
    <div class="flex items-center gap-[22px]">
      <button aria-label="Start"><svg class="size-[19px]" viewBox="0 0 16 16"><path d="m0 2.300 7-1v6.200H0zM8 1.200 16 0v7.500H8zM0 8.500h7v6.200l-7-1zM8 8.500h8V16l-8-1.200z" fill="#fff"/></svg></button>
      <button aria-label="Cortana"><svg class="size-[19px]" viewBox="0 0 16 16"><circle cx="8" cy="8" r="6.500" fill="none" stroke="#fff" stroke-width="2"/></svg></button>
      <button aria-label="Task view"><svg class="size-[19px]" viewBox="0 0 16 16"><path d="M1 0v3h9V0M1 16v-3h9v3M1 5h9v6H1zM14 0v16" fill="none" stroke="#ddd" stroke-width="1.300"/><path d="M12.500 4h3v3h-3z" fill="#fff"/></svg></button>
      <button aria-label="Edge" class="ml-[3px]"><svg class="size-[19px]" viewBox="0 0 16 16"><path d="M.5 8C1 2 5 0 8.500 0 13 0 15.500 3.500 15.300 9H5.500c.5 4.500 5 5 9 3v3C9 17.500 2 16 2.300 9.500 2.500 7 4 5 6 4 3.500 4.500 1.500 6 .5 8zm5-1.500h5.300C10.500 2.500 6 3 5.500 6.500z" fill="#1b7fd6"/></svg></button>
      <button aria-label="PredatorSense"><svg class="size-[19px]" viewBox="0 0 16 16"><path d="M0 0h16v16H0z" fill="#161616"/><path d="m1 1 4 5v6M15 1l-4 5v6M6 7l2 2 2-2M8 9v6" fill="none" stroke="#888"/><path d="M1 1v7M15 1v7" stroke="#7a2028" stroke-width="1.500"/></svg></button>
      <button aria-label="Store"><svg class="size-[19px]" viewBox="0 0 16 16"><path d="M5 4V1h6v3" fill="none" stroke="#ddd"/><path d="M0 4h16v12H1z" fill="#f5f5f5"/><path d="M4.500 6h3v3h-3z" fill="#e5502c"/><path d="M8.500 6h3v3h-3z" fill="#7ab32e"/><path d="M4.500 10h3v3h-3z" fill="#2a9be0"/><path d="M8.500 10h3v3h-3z" fill="#f3b51d"/></svg></button>
      <button aria-label="Chrome"><svg class="size-[19px]" viewBox="0 0 16 16"><circle cx="8" cy="8" r="7.500" fill="#e9c22f"/><path d="M8 8 1.500 4.200A7.500 7.500 0 0 1 14.600 4.500H8z" fill="#dc4a3c"/><path d="M8 8 1.500 4.200A7.500 7.500 0 0 0 7.500 15.500L11 10z" fill="#3ea055"/><circle cx="8" cy="8" r="3.500" fill="#fff"/><circle cx="8" cy="8" r="2.700" fill="#4a86e0"/></svg></button>
      <button aria-label="Explorer"><svg class="size-[19px]" viewBox="0 0 16 16"><path d="M0 2h6l1 2h9v11H0z" fill="#f3d675"/><path d="M2 9h12v6h-3v-3H5v3H2z" fill="#58b4d8"/></svg></button>
      <button aria-label="SOLIDWORKS"><svg class="size-[19px]" viewBox="0 0 16 16"><path d="m1 3 4-3h10v9l-3 2H1z" fill="#c9232b"/><text x="2" y="8" font-size="7" font-weight="bold" font-family="Liberation Sans, sans-serif" fill="#fff">SW</text><text x="2" y="16" font-size="5" font-weight="bold" font-family="Liberation Sans, sans-serif" fill="#ddd">2018</text></svg></button>
    </div>
    <div class="flex items-center h-full">
      <svg class="size-[18px]" viewBox="0 0 16 16" fill="none" stroke="#e6e6e6" stroke-width="1.200"><circle cx="11.500" cy="3.500" r="2.500"/><circle cx="5" cy="8" r="2.500"/><path d="M1 15c0-5 8-5 8 0M8 9c1-3 7-3 7.500 1.500"/></svg>
      <svg class="size-[20px] ml-[14px] rotate-180"><use href="#chev"/></svg>
      <svg class="size-[18px] ml-[10px]" viewBox="0 0 16 16" fill="none" stroke="#e6e6e6"><path d="M4 3.500h11.500v8H2.500V7M6 14.500h6M9 11.500v3M.5 2h3v4h-3z"/></svg>
      <svg class="size-[18px] ml-[9px]" viewBox="0 0 16 16"><path d="M4 5h10.500v7H3V9" fill="#e6e6e6" stroke="#e6e6e6"/><path d="M15.500 7v3M.5 3v3h4V3M2.500 6v4" fill="none" stroke="#e6e6e6"/></svg>
      <svg class="size-[18px] ml-[8px]" viewBox="0 0 16 16" fill="none" stroke="#e6e6e6"><path d="M.5 6H3l3.500-3v10L3 10H.5zM9 6c1 1 1 3 0 4"/><path d="M11 4.500c2 2 2 5 0 7M13 3c3 3 3 7 0 10" stroke="#888"/></svg>
      <div class="h-full w-[35px] ml-[8px] bg-[#474747] flex items-center justify-center"><svg class="size-[19px]" viewBox="0 0 16 16" fill="none" stroke="#e6e6e6" stroke-width="1.200"><path d="M4 11 11 1l2 1.500L6 12.500l-2.500 1zM9 9c8-5 8 2 3 2M7 8C1 8-1 14 3 15c3 0 3-3 5-5"/></svg></div>
      <span class="w-[40px] text-center">IND</span>
      <span class="w-[46px] text-center">23:55</span>
      <svg class="size-[19px] ml-[13px]" viewBox="0 0 16 16"><path d="M.7 1.500h14.600v11h-5L8 15l-2.300-2.500h-5z" fill="none" stroke="#fff" stroke-width="1.200"/></svg>
      <span class="h-full ml-[22px] w-[2px] border-l border-[#777]"></span>
    </div>
  </footer>

  <script>
    // feature tree: [icon, label, expandable]
    const features = [
      ['history', 'History', 1], ['sensors', 'Sensors'], ['annot', 'Annotations', 1], ['material', 'Material &lt;not specified&gt;'],
      ['plane', 'Front Plane'], ['plane', 'Top Plane'], ['plane', 'Right Plane'], ['origin', 'Origin'],
      ['boss', 'Boss-Extrude1', 1], ['boss', 'Boss-Extrude2', 1], ['boss', 'Boss-Extrude3', 1], ['boss', 'Boss-Extrude4', 1],
      ['boss', 'Boss-Extrude5', 1], ['boss', 'Boss-Extrude6', 1], ['sketch', 'Sketch11'], ['boss', 'Boss-Extrude8', 1],
      ['cut', 'Cut-Extrude1', 1], ['fillet', 'Fillet9'], ['fillet', 'Fillet10'], ['cut', 'Cut-Extrude2', 1],
      ['fillet', 'Fillet18'], ['fillet', 'Fillet19'], ['fillet', 'Fillet20'], ['fillet', 'Fillet21'], ['fillet', 'Fillet22'],
      ['chamfer', 'Chamfer1'], ['chamfer', 'Chamfer2'], ['chamfer', 'Chamfer3'],
      ['fillet', 'Fillet23'], ['fillet', 'Fillet24'], ['fillet', 'Fillet25']
    ];
    document.getElementById('tree').innerHTML =
      `<div class="flex-1 min-h-0 flex items-center gap-[3px] pl-[2px] whitespace-pre"><svg class="size-[17px] shrink-0"><use href="#part"/></svg>final hub  (Default&lt;&lt;Default&gt;_Dis</div>` +
      features.map(([icon, label, open]) =>
        `<div class="flex-1 min-h-0 flex items-center pl-[8px]"><span class="w-[15px]">${open ? '<span class="block w-0 border-y-[3px] border-y-transparent border-l-4 border-l-[#555]"></span>' : ''}</span><svg class="size-[17px] mr-[3px]"><use href="#${icon}"/></svg>${label}</div>`
      ).join('') +
      `<div class="h-[8px] shrink-0 overflow-hidden pl-[23px]"><svg class="size-[17px] mt-[3px]"><use href="#fillet"/></svg></div>`;

    // side toolbar, one list per group
    const group = (cls, icons) => `<div class="${cls} flex flex-col justify-evenly ml-[4px] mr-[2px] border-b border-[#999]">` +
      icons.map(i => `<button aria-label="${i}" class="w-[20px] flex justify-center"><svg class="size-[18px]"><use href="#${i}"/></svg></button>`).join('') + '</div>';
    document.getElementById('tools').innerHTML =
      group('h-[74px]', ['u-shape', 'sweep', 'loft']) +
      group('h-[194px]', ['g1', 'g2', 'g3', 'g4', 'g4', 'g5', 'g1', 'umbrella']) +
      group('h-[78px]', ['cut', 'cube', 'grid']) +
      group('h-[101px]', ['g4', 'g3', 'g5', 'g4']) +
      group('h-[54px]', ['bead', 'boss']);
  </script>
</body>
</html>
